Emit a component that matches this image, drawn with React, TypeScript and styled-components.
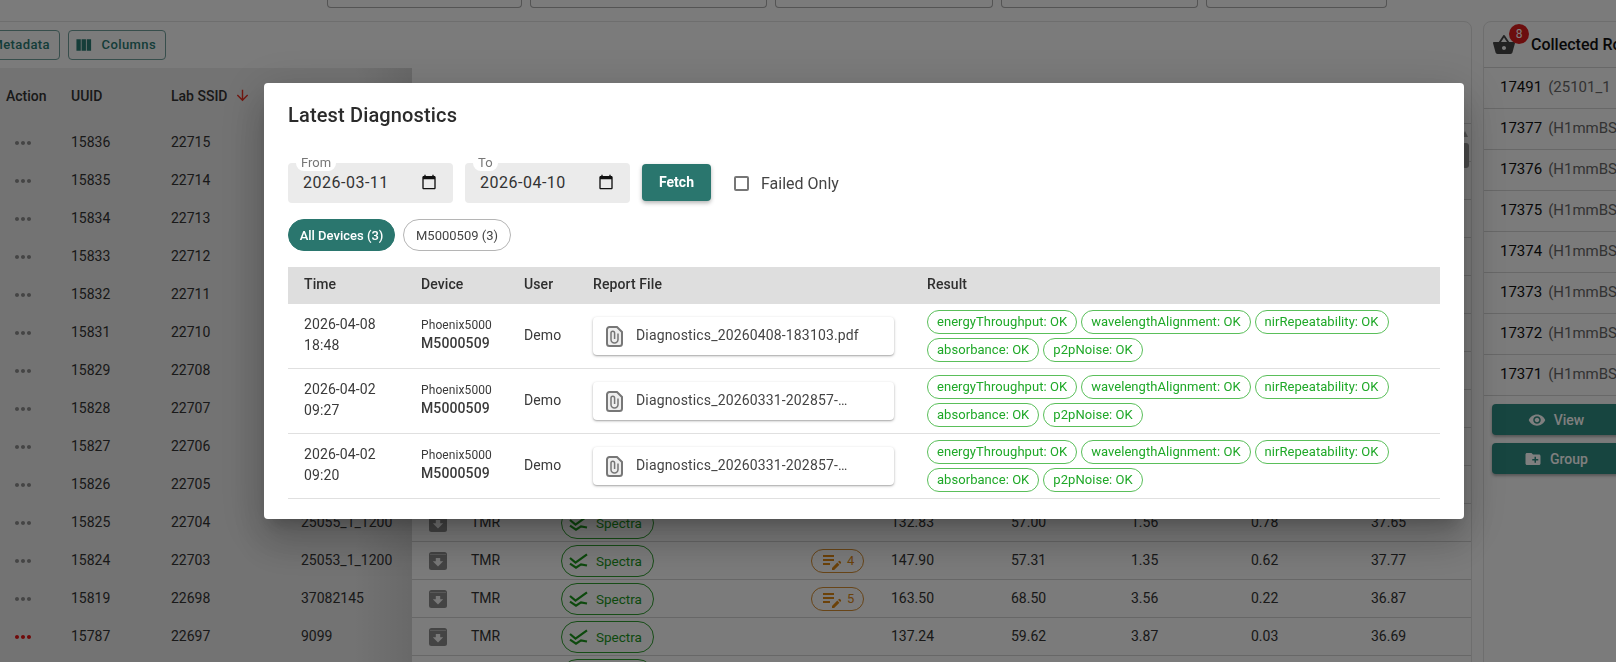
import React from 'react';
import styled, {createGlobalStyle} from 'styled-components';
import {
    MdArrowDownward,
    MdCalendarToday,
    MdCreateNewFolder,
    MdEditNote,
    MdMoreHoriz,
    MdShoppingBasket,
    MdViewColumn,
    MdVisibility,
} from 'react-icons/md';

const GlobalStyle = createGlobalStyle`
  html, body {
    margin: 0;
    height: 100%;
    overflow: hidden;
    background: #f6f6f6;
    font-family: Roboto, "Liberation Sans", sans-serif;
    font-size: 14px;
    color: #333;
  }
  * { box-sizing: border-box; }
`;

const Page = styled.div`
  width: 1616px;
  height: 662px;
  overflow: hidden;
`;

const TopBar = styled.div`
  display: flex;
  align-items: flex-start;
  gap: 8px;
  height: 21px;
  padding-left: 327px;
`;

const TopButton = styled.div<{$w: number}>`
  width: ${p => p.$w}px;
  height: 8px;
  border: 1px solid #a8a8a8;
  border-top: none;
  border-radius: 0 0 4px 4px;
`;

const Content = styled.div`
  display: flex;
  gap: 11px;
  margin-left: -60px;
  width: 1760px;
`;

const MainCard = styled.div`
  position: relative;
  flex: none;
  width: 1532px;
  height: 700px;
  border: 1px solid #dcdcdc;
  border-radius: 8px 8px 0 0;
  overflow: hidden;
`;

const Toolbar = styled.div`
  display: flex;
  align-items: center;
  gap: 8px;
  height: 46px;
  padding: 0 0 0 7px;
`;

const ToolButton = styled.div<{$w: number}>`
  display: flex;
  align-items: center;
  justify-content: flex-end;
  gap: 8px;
  width: ${p => p.$w}px;
  height: 30px;
  padding: 0 9px 1px 5px;
  border: 1px solid #6f9d98;
  border-radius: 4px;
  color: #2a7a72;
  font-size: 13px;
  font-weight: 500;
  letter-spacing: .4px;
`;

const TableWrap = styled.div`
  display: flex;
`;

const FixedPane = styled.div`
  flex: none;
  width: 471px;
  background: linear-gradient(to right, #e6e6e6 88%, #d2d2d2);
`;

const ScrollPane = styled.div`
  flex: 1;
`;

const FixedRow = styled.div<{$head?: boolean}>`
  display: grid;
  grid-template-columns: 65px 65px 100px 130px 1fr;
  align-items: center;
  height: ${p => (p.$head ? 56 : 38)}px;
  font-weight: ${p => (p.$head ? 500 : 400)};
`;

const ScrollRow = styled.div<{$head?: boolean}>`
  display: grid;
  grid-template-columns: 17px 42px 90px 250px 80px 120px 120px 120px 120px 1fr;
  align-items: center;
  height: ${p => (p.$head ? 56 : 38)}px;
  border-bottom: 1px solid #cfcfcf;
`;

const HeadCell = styled.div`
  display: flex;
  align-items: center;
  gap: 6px;
  padding-bottom: 1px;
`;

const Cell = styled.div`
  padding-bottom: 2px;
`;

const ActionCell = styled.div<{$alert?: boolean}>`
  display: flex;
  padding-left: 5px;
  color: ${p => (p.$alert ? '#e01515' : '#8a8a8a')};
`;

const SortArrow = styled(MdArrowDownward)`
  color: #e53020;
`;

const SpectraChip = styled.div`
  display: flex;
  align-items: center;
  gap: 8px;
  width: 93px;
  height: 32px;
  padding-left: 7px;
  border: 1px solid #2f9a2f;
  border-radius: 16px;
  color: #1a931a;
  font-size: 13.5px;
`;

const NoteChip = styled.div`
  display: flex;
  align-items: center;
  gap: 3px;
  width: 53px;
  height: 24px;
  padding-left: 8px;
  border: 1px solid #d08a30;
  border-radius: 12px;
  color: #d98412;
  font-size: 13px;
`;

const ScrollThumb = styled.div`
  position: absolute;
  top: 121px;
  left: 1521px;
  width: 7px;
  height: 25px;
  background: #939393;
  border-radius: 3px;
`;

const ScrollArrow = styled.div`
  position: absolute;
  top: 109px;
  left: 1521px;
  width: 0;
  height: 0;
  border-left: 3.5px solid transparent;
  border-right: 3.5px solid transparent;
  border-bottom: 6px solid #a0a0a0;
`;

const SidePanel = styled.div`
  flex: none;
  width: 160px;
  height: 700px;
  border: 1px solid #dcdcdc;
  border-radius: 8px 8px 0 0;
`;

const SideHead = styled.div`
  display: flex;
  align-items: center;
  height: 46px;
  padding-left: 8px;
  border-bottom: 1px solid #d0d0d0;
  color: #111;
  font-size: 16px;
  font-weight: 500;
  white-space: nowrap;
`;

const BasketWrap = styled.div`
  position: relative;
  display: flex;
  margin-right: 15px;
  color: #444;
`;

const Badge = styled.span`
  position: absolute;
  top: -9px;
  left: 17px;
  width: 20px;
  height: 20px;
  border-radius: 50%;
  background: #d91c1c;
  color: #fff;
  font-size: 12px;
  font-weight: 400;
  line-height: 20px;
  text-align: center;
`;

const SideRow = styled.div`
  display: flex;
  align-items: center;
  gap: 6px;
  height: 41px;
  padding: 0 0 2px 16px;
  border-bottom: 1px solid #d0d0d0;
  font-size: 15px;
  color: #111;
  white-space: nowrap;
`;

const SideMuted = styled.span`
  color: #666;
`;

const SideActions = styled.div`
  display: flex;
  flex-direction: column;
  gap: 8px;
  padding: 8px 0 0 8px;
`;

const SideButton = styled.div`
  display: flex;
  align-items: center;
  justify-content: center;
  gap: 8px;
  width: 128px;
  height: 31px;
  border-radius: 4px;
  background: #2e8a80;
  color: #fff;
  font-size: 14px;
  font-weight: 500;
  box-shadow: 0 2px 3px rgba(0, 0, 0, .3);
`;

const Backdrop = styled.div`
  position: fixed;
  inset: 0;
  padding: 83px 0 0 264px;
  background: rgba(0, 0, 0, .5);
`;

const Modal = styled.div`
  width: 1200px;
  height: 436px;
  background: #fff;
  border-radius: 4px;
  box-shadow: 0 11px 15px -7px rgba(0, 0, 0, .2), 0 24px 38px 3px rgba(0, 0, 0, .14), 0 9px 46px 8px rgba(0, 0, 0, .12);
`;

const ModalTitle = styled.h2`
  margin: 0;
  padding: 16px 24px;
  font-size: 20px;
  font-weight: 500;
  line-height: 32px;
  letter-spacing: .15px;
  color: #2b2b2b;
`;

const ModalBody = styled.div`
  display: flex;
  flex-direction: column;
  padding: 16px 24px 0;
`;

const FilterRow = styled.div`
  display: flex;
  align-items: center;
  gap: 12px;
`;

const DateField = styled.div`
  position: relative;
  display: flex;
  align-items: center;
  justify-content: space-between;
  width: 165px;
  height: 40px;
  padding: 0 16px 2px 15px;
  background: #ebebeb;
  border-radius: 4px;
  font-size: 16px;
  letter-spacing: .5px;
  color: #333;
`;

const DateLabel = styled.span`
  position: absolute;
  top: -8px;
  left: 8px;
  height: 16px;
  padding: 0 5px;
  background: #fff;
  border-radius: 8px;
  color: #777;
  font-size: 13px;
  line-height: 15px;
  letter-spacing: 0;
`;

const FetchButton = styled.div`
  display: flex;
  align-items: center;
  justify-content: center;
  width: 69px;
  height: 37px;
  margin-bottom: 1px;
  padding-bottom: 2px;
  background: #2a766e;
  border-radius: 4px;
  color: #fff;
  font-size: 14px;
  font-weight: 700;
  box-shadow: 0 2px 4px rgba(0, 0, 0, .3);
`;

const CheckLabel = styled.label`
  display: flex;
  align-items: center;
  gap: 12px;
  margin-left: 11px;
  font-size: 16px;
  color: #444;
`;

const CheckBox = styled.span`
  width: 15px;
  height: 15px;
  border: 2px solid #767676;
  border-radius: 2px;
`;

const PillRow = styled.div`
  display: flex;
  gap: 8px;
  margin-top: 16px;
`;

const Pill = styled.div<{$active?: boolean}>`
  display: flex;
  align-items: center;
  justify-content: center;
  height: 32px;
  width: ${p => (p.$active ? 107 : 108)}px;
  border: 1px solid ${p => (p.$active ? '#2a766e' : '#b5b5b5')};
  border-radius: 16px;
  background: ${p => (p.$active ? '#2a766e' : '#fff')};
  color: ${p => (p.$active ? '#fff' : '#444')};
  font-size: 13px;
  font-weight: ${p => (p.$active ? 500 : 400)};
`;

const DiagHead = styled.div`
  display: grid;
  grid-template-columns: 117px 103px 69px 334px 1fr;
  align-items: center;
  height: 37px;
  margin-top: 16px;
  padding: 0 0 3px 16px;
  background: #dedede;
  font-weight: 500;
  letter-spacing: .1px;
  color: #2f2f2f;
`;

const DiagRow = styled.div`
  display: grid;
  grid-template-columns: 117px 103px 69px 334px 1fr;
  align-items: center;
  height: 65px;
  padding-left: 16px;
  border-bottom: 1px solid #e0e0e0;
  color: #3a3a3a;
  letter-spacing: .1px;
`;

const TimeCell = styled.div`
  padding-bottom: 2px;
  line-height: 21px;
  white-space: nowrap;
`;

const DeviceCell = styled.div`
  display: flex;
  flex-direction: column;
  padding-bottom: 4px;
  line-height: 18px;
  font-size: 12px;
`;

const UserCell = styled.span`
  padding-bottom: 3px;
`;

const Serial = styled.span`
  font-size: 14px;
  font-weight: 500;
`;

const FileButton = styled.div`
  display: flex;
  align-items: center;
  gap: 13px;
  width: 301px;
  height: 38px;
  padding-left: 13px;
  border-radius: 4px;
  background: #fff;
  color: #444;
  letter-spacing: .15px;
  white-space: nowrap;
  box-shadow: 0 1px 3px rgba(0, 0, 0, .28), 0 1px 1px rgba(0, 0, 0, .12);
`;

const FileName = styled.span`
  padding-bottom: 3px;
`;

const ChipWrap = styled.div`
  display: flex;
  flex-wrap: wrap;
  gap: 4px;
  width: 480px;
`;

const ResultChip = styled.span`
  display: flex;
  align-items: center;
  height: 24px;
  padding: 0 9px 1px;
  border: 1px solid #5abf5a;
  border-radius: 12px;
  color: #1fa828;
  font-size: 13px;
  letter-spacing: .05px;
`;

function SpectraIcon() {
    return (
        <svg width="19" height="18" viewBox="0 0 19 18" fill="none" stroke="currentColor" strokeWidth="2.2">
            <path d="M1 6 L6.5 10.6 L18 2.3" />
            <path d="M1 11.7 L7 15.7 L12 12.3 L18 13.5" />
        </svg>
    );
}

function ArchiveIcon() {
    return (
        <svg width="18" height="18" viewBox="0 0 18 18">
            <rect width="18" height="18" rx="2.5" fill="#888" />
            <rect x="1" y="2" width="16" height="1" fill="#b0b0b0" />
            <path d="M9 14.5 L3.8 9.3 H6.8 V6 H11.2 V9.3 H14.2 Z" fill="#f0f0f0" />
        </svg>
    );
}

function ReportIcon() {
    return (
        <svg width="17" height="21" viewBox="0 0 17 21" fill="#eeeeee" stroke="#777" strokeWidth="2" style={{flex: 'none'}}>
            <path d="M3.5 1 H11 L16 6 V17.5 a2.5 2.5 0 0 1 -2.5 2.5 H3.5 a2.5 2.5 0 0 1 -2.5 -2.5 V3.5 a2.5 2.5 0 0 1 2.5 -2.5 Z" />
            <path d="M12 7.5 V13.5 a3.5 3.5 0 0 1 -7 0 V7 a1.8 1.8 0 0 1 3.6 0 V13" fill="none" strokeWidth="1.5" />
        </svg>
    );
}

const rows = [
    {uuid: '15836', ssid: '22715'},
    {uuid: '15835', ssid: '22714'},
    {uuid: '15834', ssid: '22713'},
    {uuid: '15833', ssid: '22712'},
    {uuid: '15832', ssid: '22711'},
    {uuid: '15831', ssid: '22710'},
    {uuid: '15829', ssid: '22708'},
    {uuid: '15828', ssid: '22707'},
    {uuid: '15827', ssid: '22706'},
    {uuid: '15826', ssid: '22705'},
    {uuid: '15825', ssid: '22704', sample: '25055_1_1200', values: ['132.83', '57.00', '1.56', '0.78', '37.65']},
    {uuid: '15824', ssid: '22703', sample: '25053_1_1200', notes: 4, values: ['147.90', '57.31', '1.35', '0.62', '37.77']},
    {uuid: '15819', ssid: '22698', sample: '37082145', notes: 5, values: ['163.50', '68.50', '3.56', '0.22', '36.87']},
    {uuid: '15787', ssid: '22697', sample: '9099', alert: true, values: ['137.24', '59.62', '3.87', '0.03', '36.69']},
] as {uuid: string; ssid: string; sample?: string; notes?: number; alert?: boolean; values?: string[]}[];

const collected = [
    ['17491', '(25101_1'],
    ['17377', '(H1mmBS'],
    ['17376', '(H1mmBS'],
    ['17375', '(H1mmBS'],
    ['17374', '(H1mmBS'],
    ['17373', '(H1mmBS'],
    ['17372', '(H1mmBS'],
    ['17371', '(H1mmBS'],
];

const reports = [
    {date: '2026-04-08', time: '18:48', file: 'Diagnostics_20260408-183103.pdf'},
    {date: '2026-04-02', time: '09:27', file: 'Diagnostics_20260331-202857-…'},
    {date: '2026-04-02', time: '09:20', file: 'Diagnostics_20260331-202857-…'},
];

const checks = ['energyThroughput', 'wavelengthAlignment', 'nirRepeatability', 'absorbance', 'p2pNoise'];

function App() {
    return (
        <>
            <GlobalStyle />
            <Page>
                <TopBar>
                    <TopButton $w={195} />
                    <TopButton $w={237} />
                    <TopButton $w={218} />
                    <TopButton $w={197} />
                    <TopButton $w={181} />
                </TopBar>
                <Content>
                    <MainCard>
                        <Toolbar>
                            <ToolButton $w={112}>Metadata</ToolButton>
                            <ToolButton $w={98}>
                                <MdViewColumn size={20} />
                                Columns
                            </ToolButton>
                        </Toolbar>
                        <TableWrap>
                            <FixedPane>
                                <FixedRow $head>
                                    <span />
                                    <HeadCell>Action</HeadCell>
                                    <HeadCell>UUID</HeadCell>
                                    <HeadCell>Lab SSID <SortArrow size={17} /></HeadCell>
                                    <span />
                                </FixedRow>
                                {rows.map(r => (
                                    <FixedRow key={r.uuid}>
                                        <span />
                                        <ActionCell $alert={r.alert}><MdMoreHoriz size={24} /></ActionCell>
                                        <Cell>{r.uuid}</Cell>
                                        <Cell>{r.ssid}</Cell>
                                        <Cell>{r.sample}</Cell>
                                    </FixedRow>
                                ))}
                            </FixedPane>
                            <ScrollPane>
                                <ScrollRow $head />
                                {rows.map(r => (
                                    <ScrollRow key={r.uuid}>
                                        <span />
                                        {r.values ? <ArchiveIcon /> : <span />}
                                        <Cell>{r.values ? 'TMR' : ''}</Cell>
                                        {r.values ? <SpectraChip><SpectraIcon />Spectra</SpectraChip> : <span />}
                                        {r.notes ? <NoteChip><MdEditNote size={24} />{r.notes}</NoteChip> : <span />}
                                        {(r.values || ['', '', '', '', '']).map((v, i) => (
                                            <Cell key={i}>{v}</Cell>
                                        ))}
                                    </ScrollRow>
                                ))}
                                <ScrollRow>
                                    <span />
                                    <span />
                                    <span />
                                    <SpectraChip><SpectraIcon /></SpectraChip>
                                </ScrollRow>
                            </ScrollPane>
                        </TableWrap>
                        <ScrollArrow />
                        <ScrollThumb />
                    </MainCard>
                    <SidePanel>
                        <SideHead>
                            <BasketWrap>
                                <MdShoppingBasket size={24} />
                                <Badge>8</Badge>
                            </BasketWrap>
                            Collected Rows
                        </SideHead>
                        {collected.map(([id, name]) => (
                            <SideRow key={id}>
                                {id}
                                <SideMuted>{name}</SideMuted>
                            </SideRow>
                        ))}
                        <SideActions>
                            <SideButton><MdVisibility size={18} />View</SideButton>
                            <SideButton><MdCreateNewFolder size={18} />Group</SideButton>
                        </SideActions>
                    </SidePanel>
                </Content>
            </Page>
            <Backdrop>
                <Modal>
                    <ModalTitle>Latest Diagnostics</ModalTitle>
                    <ModalBody>
                        <FilterRow>
                            <DateField>
                                <DateLabel>From</DateLabel>
                                2026-03-11
                                <MdCalendarToday size={16} color="#111" />
                            </DateField>
                            <DateField>
                                <DateLabel>To</DateLabel>
                                2026-04-10
                                <MdCalendarToday size={16} color="#111" />
                            </DateField>
                            <FetchButton>Fetch</FetchButton>
                            <CheckLabel><CheckBox />Failed Only</CheckLabel>
                        </FilterRow>
                        <PillRow>
                            <Pill $active>All Devices (3)</Pill>
                            <Pill>M5000509 (3)</Pill>
                        </PillRow>
                        <DiagHead>
                            <span>Time</span>
                            <span>Device</span>
                            <span>User</span>
                            <span>Report File</span>
                            <span>Result</span>
                        </DiagHead>
                        {reports.map((r, i) => (
                            <DiagRow key={i}>
                                <TimeCell>{r.date}<br />{r.time}</TimeCell>
                                <DeviceCell>
                                    Phoenix5000
                                    <Serial>M5000509</Serial>
                                </DeviceCell>
                                <UserCell>Demo</UserCell>
                                <FileButton>
                                    <ReportIcon />
                                    <FileName>{r.file}</FileName>
                                </FileButton>
                                <ChipWrap>
                                    {checks.map(c => <ResultChip key={c}>{c}: OK</ResultChip>)}
                                </ChipWrap>
                            </DiagRow>
                        ))}
                    </ModalBody>
                </Modal>
            </Backdrop>
        </>
    );
}

export default App;
